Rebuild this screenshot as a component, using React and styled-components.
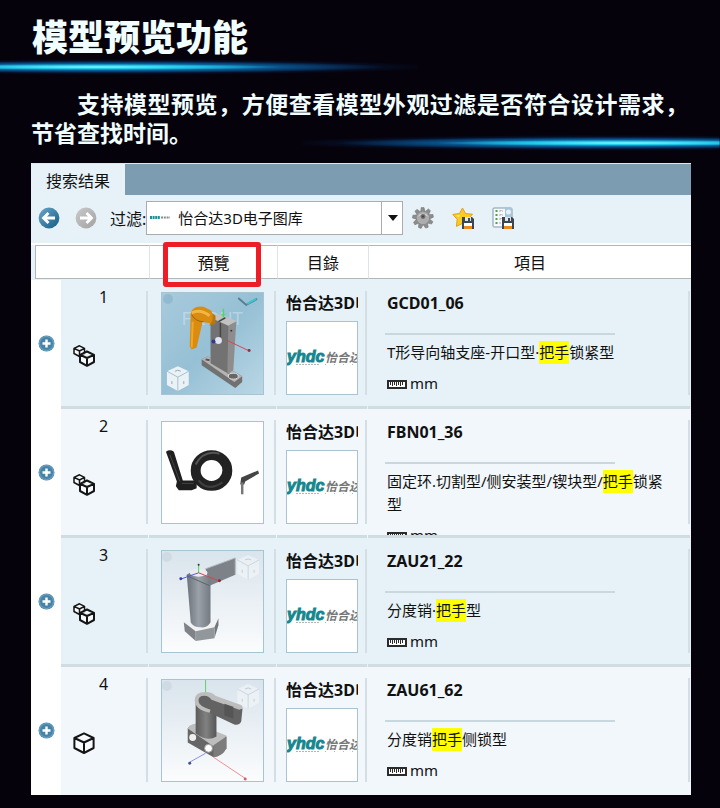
import React, { useState } from 'react'
import styled, { createGlobalStyle } from 'styled-components'

const GlobalStyle = createGlobalStyle`
  * {
    box-sizing: border-box;
  }
  body {
    margin: 0;
    background: #05020b;
    color: #111;
    font-family: 'Noto Sans', 'Noto Sans CJK SC', sans-serif;
    font-size: 15px;
  }
  button {
    display: flex;
    padding: 0;
    border: none;
    background: none;
    cursor: pointer;
  }
`

const results = [
  {
    id: 1,
    name: 'GCD01_06',
    before: 'T形导向轴支座-开口型·',
    after: '锁紧型',
    assembly: true,
    preview: 'support',
  },
  {
    id: 2,
    name: 'FBN01_36',
    before: '固定环.切割型/侧安装型/锲块型/',
    after: '锁紧型',
    assembly: true,
    preview: 'ring',
  },
  {
    id: 3,
    name: 'ZAU21_22',
    before: '分度销·',
    after: '型',
    assembly: true,
    preview: 'pin',
  },
  {
    id: 4,
    name: 'ZAU61_62',
    before: '分度销',
    after: '侧锁型',
    assembly: false,
    preview: 'clamp',
  },
]

const ArrowIcon = ({ id, light, dark, flip }) => (
  <svg width="22" height="22" viewBox="0 0 22 22" aria-hidden="true">
    <defs>
      <linearGradient id={id} x1="0" y1="0" x2="1" y2="1">
        <stop offset="0" stopColor={light} />
        <stop offset="1" stopColor={dark} />
      </linearGradient>
    </defs>
    <circle cx="11" cy="11" r="10.4" fill={`url(#${id})`} />
    <path
      d="M17 11H6M10.5 6L5.5 11l5 5"
      transform={flip ? 'rotate(180 11 11)' : undefined}
      fill="none"
      stroke="#fff"
      strokeWidth="2.8"
    />
  </svg>
)

const Floppy = ({ x, y }) => (
  <g transform={`translate(${x} ${y})`}>
    <path d="M0 0h10l2 2v10H0z" fill="#3b4650" />
    <rect x="3" y="0" width="6" height="4" fill="#dfe6ea" />
    <rect x="6" y="1" width="2" height="3" fill="#3b4650" />
    <rect x="2" y="6" width="8" height="4" fill="#fff" />
    <rect x="2" y="9" width="8" height="3" fill="#ef8b1d" />
  </g>
)

const GearIcon = () => (
  <svg width="22" height="22" viewBox="0 0 22 22" aria-hidden="true">
    {[0, 40, 80, 120, 160, 200, 240, 280, 320].map(deg => (
      <path
        key={deg}
        d="M9.2 .6h2.800l1.600 6H8.400z"
        fill="#8d8d8d"
        stroke="#707070"
        strokeWidth=".5"
        transform={`rotate(${deg} 11 11)`}
      />
    ))}
    <circle cx="11" cy="11" r="6.200" fill="#adadad" />
    <path d="M6.500 9a5.500 4.500 0 0 1 9 0" stroke="#dadada" fill="none" />
    <circle cx="11" cy="9.500" r="2.400" fill="#6d6d6d" />
    <circle cx="11" cy="9.500" r="1" fill="#444" />
  </svg>
)

const StarSaveIcon = () => (
  <svg width="22" height="22" viewBox="0 0 22 22" aria-hidden="true">
    <path
      d="M10.5 1l3 5.6 7 .6-4.6 5 1 6.8-6.4-2.6L4.4 19.4l.8-7L.8 7.4l6.6-.8z"
      fill="#f9cb23"
      stroke="#e0a21a"
      strokeLinejoin="round"
    />
    <path d="M10 3.5L8 8l-4.5.6L7 10z" fill="#fdeb8c" />
    <Floppy x={10} y={10} />
  </svg>
)

const ListSaveIcon = () => (
  <svg width="22" height="22" viewBox="0 0 22 22" aria-hidden="true">
    <rect x="1" y="1" width="19" height="19" rx="1" fill="#f5f9fb" stroke="#7f9bad" />
    <path d="M13 1h7v10h-7z" fill="#a9c5d8" />
    <circle cx="16.5" cy="5" r="2.5" fill="#e8f2f8" />
    <path d="M4.5 3v16" stroke="#5d9a4a" strokeWidth="2" strokeDasharray="2 2" />
    <path d="M7 4h4M7 8h4M7 12h3M7 16h3" stroke="#a5b1b9" strokeDasharray="2 1" />
    <path d="M9 3v9" stroke="#d08c7d" strokeDasharray="1 3" />
    <Floppy x={10} y={10} />
  </svg>
)

const PlusIcon = () => (
  <svg width="17" height="17" viewBox="0 0 17 17" aria-hidden="true">
    <circle cx="8.5" cy="8.5" r="8" fill="#4584a8" />
    <circle cx="8.5" cy="8.5" r="7" fill="none" stroke="#77a7c0" />
    <path d="M8.5 4.5v8M4.5 8.5h8" stroke="#fff" strokeWidth="2.4" />
  </svg>
)

const AssemblyIcon = () => (
  <svg width="22" height="22" viewBox="0 0 22 22" aria-hidden="true">
    <g fill="#f6fafc" stroke="#151515" strokeLinejoin="round">
      <path
        d="M6.5 .8L11.5 3.4V9L6.5 11.5L1 8.5V3.4ZM1 3.4L6.5 6L11.5 3.4M6.5 6V11.5"
        strokeWidth="1.5"
      />
      <path
        d="M14 6.5L21 9.8V17L14 20.8L7 17V9.8ZM7 9.8L14 13L21 9.8M14 13V20.8"
        strokeWidth="2"
      />
    </g>
  </svg>
)

const PartIcon = () => (
  <svg width="22" height="22" viewBox="0 0 22 22" aria-hidden="true">
    <path
      d="M11 1.4L20.6 6V16L11 21L1.4 16V6ZM1.4 6L11 10.5L20.6 6M11 10.5V21"
      fill="#fafdfe"
      stroke="#151515"
      strokeWidth="2"
      strokeLinejoin="round"
    />
  </svg>
)

const RulerIcon = () => (
  <svg width="20" height="9" viewBox="0 0 20 9" aria-hidden="true">
    <rect x="1" y="1" width="18" height="7" fill="#fff" stroke="#2b2b2b" strokeWidth="2" />
    <path
      d="M3.5 1v4M5.5 1v5M7.5 1v4M9.500 1v5M11.500 1v4M13.500 1v5M15.500 1v4"
      stroke="#2b2b2b"
    />
  </svg>
)

const BrandLogo = () => (
  <svg width="70" height="72" viewBox="0 0 70 72" role="img" aria-label="怡合达">
    <text
      x="0"
      y="40"
      fill="#16878f"
      stroke="#16878f"
      strokeWidth="1"
      fontFamily="'Liberation Sans', sans-serif"
      fontWeight="700"
      fontStyle="italic"
      fontSize="16"
    >
      yhdc
    </text>
    <text
      x="38"
      y="40"
      fill="#777"
      fontFamily="'Noto Sans CJK SC', sans-serif"
      fontWeight="700"
      fontStyle="italic"
      fontSize="12"
    >
      怡合达
    </text>
    <path d="M9 42.5h24" stroke="#b5b5b5" strokeDasharray="2 1" />
    <path d="M38 42.5h32" stroke="#8fc3c8" strokeDasharray="1 8" />
  </svg>
)

const SmallLogo = () => (
  <svg width="21" height="6" viewBox="0 0 21 6" aria-hidden="true">
    <path d="M1 2.5h10" stroke="#1b8f98" strokeWidth="3" strokeDasharray="2 .6" />
    <path d="M12 2.5h9" stroke="#8a8a8a" strokeWidth="2" strokeDasharray="2 .8" />
  </svg>
)

const GhostCube = ({ x, y, opacity }) => (
  <g transform={`translate(${x} ${y})`} opacity={opacity}>
    <path d="M0 -12L11 -7V7L0 13L-11 7V-7Z" fill="#fff" />
    <path d="M-11 -7L0 -1L11 -7M0 -1V13" stroke="#a9bfcb" fill="none" />
    <path d="M-3 -7l3-1 3 1M-6 3v3M6 3v3" stroke="#8fa8b6" fill="none" />
  </g>
)

const SupportPreview = () => (
  <>
    <rect width="102" height="102" fill="url(#skyBlue)" />
    <circle cx="6" cy="6" r="5" fill="#84b1c8" opacity=".6" />
    <text
      x="20"
      y="32"
      fill="#fff"
      opacity=".3"
      fontFamily="'Liberation Sans', sans-serif"
      fontSize="18"
    >
      FRONT
    </text>
    <path d="M77 5l8 7 11-6" stroke="#557d94" strokeWidth="2" fill="none" />
    <path d="M86 11l9-5" stroke="#3bc4cc" strokeWidth="2" />
    <path d="M40 67l6-3 35 20v6l-7 6-34-23z" fill="#717171" />
    <path d="M40 67l6-3 35 20-8 6z" fill="#b4b4b4" />
    <ellipse cx="72" cy="84" rx="5" ry="3" fill="#666" stroke="#ddd" />
    <path d="M44 67l4 1" stroke="#555" strokeWidth="2" />
    <path d="M49 25l16 5 3 1v51L49 71z" fill="#727272" />
    <path d="M67 32l8-3-3 49-6 4z" fill="#8d8d8d" />
    <path d="M49 25l8-4 18 7-8 5z" fill="#c2c2c2" />
    <path d="M57 29l7-4M59 30v18" stroke="#454545" strokeWidth="1.5" />
    <path d="M50 20l4 3v8l-6 2z" fill="#b8780c" />
    <path d="M29 20q3-8 13-6l8 4q3 9-1 13l-8-2-6 26-5 2-2-3z" fill="#d98c10" />
    <path d="M30 20q9-4 18 3" stroke="#f3b544" strokeWidth="3" fill="none" />
    <path d="M31 29l-1 26" stroke="#f1a728" strokeWidth="2" />
    <path d="M30 22q4 7 12 7" stroke="#9b610a" fill="none" />
    <circle cx="70" cy="38" r="1" fill="#333" />
    <path d="M62 16v9M60 22h4" stroke="#55d36b" strokeWidth="1.5" />
    <circle cx="57" cy="48" r="3.5" fill="#dfe3f2" />
    <circle cx="52" cy="49" r="2" fill="#34388d" />
    <path d="M66 48l21 10" stroke="#d3465a" />
    <circle cx="88" cy="58" r="1.5" fill="#7a3945" />
    <GhostCube x={16} y={86} opacity=".8" />
  </>
)

const RingPreview = () => (
  <>
    <rect width="102" height="102" fill="#fff" />
    <path d="M4 30q4-3 8 0l9 29h14v8l-5 2H17l-3-4 1-5z" fill="#1f1f1f" />
    <path d="M8 33l10 27M20 62h12" stroke="#474747" />
    <ellipse cx="50" cy="49" rx="16" ry="15.5" fill="none" stroke="#222" strokeWidth="10" />
    <path d="M34 43q8-15 24-11" stroke="#555" strokeWidth="2" fill="none" />
    <path d="M37 59q9 12 24 2" stroke="#3f3f3f" strokeWidth="2" fill="none" />
    <path d="M80 56l17-7 1 3-14 8-1 3h-4z" fill="#444" />
    <path d="M81 61v12" stroke="#777" strokeWidth="2.5" />
  </>
)

const PinPreview = () => (
  <>
    <rect width="102" height="102" fill="url(#mist)" />
    <circle cx="5" cy="6" r="5" fill="#cfdbe4" />
    <GhostCube x={87} y={16} opacity=".4" />
    <path d="M44 18l30-11v17L48 35z" fill="#7d8289" />
    <path d="M44 18l30-11v17" stroke="#b4b9be" fill="none" />
    <path d="M22 72l10-7 25 3-4 9-19 5z" fill="#f1f2f3" />
    <path d="M22 72l12 9v10l-11-10z" fill="#7f8388" />
    <path d="M53 77l4-9v7l-4 13z" fill="#72777c" />
    <path d="M34 81l19-4v11l-19 3z" fill="#92979c" />
    <path d="M25 24q10-8 24 4v44q-3 6-10 5-8 0-10-5z" fill="url(#steel)" />
    <ellipse cx="37" cy="22" rx="9" ry="4" fill="#e9ebed" />
    <path d="M25 25l23 10" stroke="#5e6369" />
    <path d="M37 22v-8" stroke="#48d45a" />
    <path d="M37 22l-17 6" stroke="#5058d8" />
    <path d="M37 22l20 8" stroke="#d04450" />
    <circle cx="19" cy="28" r="1.5" fill="#3a41a0" />
    <circle cx="58" cy="30" r="1.5" fill="#8c2d34" />
    <circle cx="37" cy="14" r="1" fill="#333" />
  </>
)

const ClampPreview = () => (
  <>
    <rect width="102" height="102" fill="url(#mist)" />
    <circle cx="5" cy="6" r="5" fill="#cfdbe4" />
    <GhostCube x={87} y={16} opacity=".4" />
    <path d="M44 0v13" stroke="#5bd26a" />
    <path d="M26 49q2-3 7-4l32 12v12q-4 8-13 9l-26-15z" fill="#666" />
    <path d="M26 49q2-4 8-5l31 12q-2 6-13 11z" fill="#bdbdbd" />
    <path d="M52 66l13-9v12q-4 8-13 9z" fill="#7c7c7c" />
    <path d="M34 18q6-6 21 5v34q-9 6-21-3z" fill="url(#iron)" />
    <path d="M40 14l39 12q3 1 2 6l-1 10q-2 4-7 3L50 34 36 24z" fill="#636363" />
    <path
      d="M33 20q0-8 11-8 7 0 10 4l25 9q3 1 2 4l-3 1-28-10q-3-4-7-4-7 0-6 6 1 5 12 8l-1 3Q33 30 33 20z"
      fill="#bdbdbd"
    />
    <path d="M63 24l9 3v12l-9-3z" fill="#555" />
    <circle cx="31" cy="58" r="3.5" fill="#f0f0f0" />
    <circle cx="47" cy="69" r="4" fill="#fff" stroke="#999" />
    <path d="M44 74l-16 9" stroke="#8990e8" />
    <circle cx="28" cy="84" r="1.5" fill="#444f8f" />
    <path d="M52 78l33 22" stroke="#ee8e96" />
    <circle cx="84" cy="100" r="1.5" fill="#d75d68" />
  </>
)

const previews = {
  support: SupportPreview,
  ring: RingPreview,
  pin: PinPreview,
  clamp: ClampPreview,
}

const GradientDefs = () => (
  <Hidden aria-hidden="true">
    <defs>
      <linearGradient id="skyBlue" x1="0" y1="0" x2="1" y2="1">
        <stop offset="0" stopColor="#a8cadc" />
        <stop offset=".5" stopColor="#96c0d5" />
        <stop offset="1" stopColor="#bad7e5" />
      </linearGradient>
      <linearGradient id="mist" x1="0" y1="0" x2="0" y2="1">
        <stop offset="0" stopColor="#d9e4ec" />
        <stop offset="1" stopColor="#fbfcfd" />
      </linearGradient>
      <linearGradient id="steel" x1="0" x2="1">
        <stop offset="0" stopColor="#6b7178" />
        <stop offset=".5" stopColor="#9ba1a8" />
        <stop offset="1" stopColor="#747a81" />
      </linearGradient>
      <linearGradient id="iron" x1="0" x2="1">
        <stop offset="0" stopColor="#5b5b5b" />
        <stop offset=".5" stopColor="#818181" />
        <stop offset="1" stopColor="#565656" />
      </linearGradient>
    </defs>
  </Hidden>
)

const ResultRow = ({ item, even }) => {
  const [open, setOpen] = useState(false)
  const Preview = previews[item.preview]

  return (
    <Row $even={even}>
      <ExpandCell>
        <button
          type="button"
          aria-label={`展开 ${item.name}`}
          aria-expanded={open}
          onClick={() => setOpen(!open)}
        >
          <PlusIcon />
        </button>
      </ExpandCell>
      <td>
        <CellBody>
          <IndexBody>
            <span>{item.id}</span>
            {item.assembly ? <AssemblyIcon /> : <PartIcon />}
          </IndexBody>
        </CellBody>
      </td>
      <td>
        <CellBody>
          <PreviewBody>
            <Thumb>
              <svg width="101" height="101" viewBox="0 0 102 102" role="img" aria-label={item.name}>
                <Preview />
              </svg>
            </Thumb>
          </PreviewBody>
        </CellBody>
      </td>
      <td>
        <CellBody>
          <CatalogBody>
            <CatalogName>怡合达3D电子图库</CatalogName>
            <LogoBox>
              <BrandLogo />
            </LogoBox>
          </CatalogBody>
        </CellBody>
      </td>
      <td>
        <CellBody>
          <ItemBody>
            <ItemName>{item.name}</ItemName>
            <Divider />
            <Description>
              {item.before}
              <mark>把手</mark>
              {item.after}
            </Description>
            <Unit>
              <RulerIcon />
              mm
            </Unit>
          </ItemBody>
        </CellBody>
      </td>
    </Row>
  )
}

const App = () => {
  return (
    <Page>
      <GlobalStyle />
      <GradientDefs />
      <Hero>
        <Title>模型预览功能</Title>
        <Glow />
        <Intro>
          支持模型预览，方便查看模型外观过滤是否符合设计需求，节省查找时间。
        </Intro>
        <BottomGlow />
      </Hero>

      <Panel>
        <TabBar role="tablist">
          <Tab type="button" role="tab" aria-selected="true">
            搜索结果
          </Tab>
        </TabBar>

        <Toolbar>
          <NavGroup>
            <button type="button" aria-label="后退">
              <ArrowIcon id="back" light="#6ba7c8" dark="#145b86" />
            </button>
            <button type="button" aria-label="前进">
              <ArrowIcon id="forward" light="#c9c9c9" dark="#a2a2a2" flip />
            </button>
          </NavGroup>
          <FilterLabel htmlFor="catalog">过滤:</FilterLabel>
          <SelectBox>
            <select id="catalog" defaultValue="yhd">
              <option value="yhd">怡合达3D电子图库</option>
            </select>
            <SelectLogo>
              <SmallLogo />
            </SelectLogo>
            <SelectArrow>
              <svg width="10" height="6" viewBox="0 0 10 6" aria-hidden="true">
                <path d="M0 0h10L5 6z" fill="#111" />
              </svg>
            </SelectArrow>
          </SelectBox>
          <ActionGroup>
            <button type="button" aria-label="设置">
              <GearIcon />
            </button>
            <button type="button" aria-label="保存收藏">
              <StarSaveIcon />
            </button>
            <button type="button" aria-label="保存列表">
              <ListSaveIcon />
            </button>
          </ActionGroup>
        </Toolbar>

        <Table>
          <colgroup>
            <col width="30" />
            <col width="88" />
            <col width="128" />
            <col width="91" />
            <col />
          </colgroup>
          <thead>
            <tr>
              <th colSpan="2">
                <HeadCell $first />
              </th>
              <th>
                <HeadCell>
                  預覽
                  <Marker />
                </HeadCell>
              </th>
              <th>
                <HeadCell>目錄</HeadCell>
              </th>
              <th>
                <HeadCell>項目</HeadCell>
              </th>
            </tr>
          </thead>
          <tbody>
            {results.map((item, i) => (
              <ResultRow key={item.id} item={item} even={i % 2 === 1} />
            ))}
          </tbody>
        </Table>
      </Panel>
    </Page>
  )
}

const Page = styled.main`
  padding-bottom: 13px;
`

const Hidden = styled.svg`
  position: absolute;
  width: 0;
  height: 0;
`

const Hero = styled.header`
  position: relative;
  padding: 15px 0 16px;
  color: #f1feff;
  font-family: 'Noto Sans CJK SC', sans-serif;
`

const Title = styled.h1`
  margin: 0;
  padding-left: 32px;
  padding-bottom: 4px;
  font-size: 36px;
  line-height: 40px;
  font-weight: 900;
`

const Glow = styled.div`
  width: 58%;
  height: 16px;
  background:
    radial-gradient(ellipse 46% 3px at 22% 50%, #7dfcff 0%, #29d9f4cc 50%, transparent 100%),
    radial-gradient(ellipse 66% 6px at 26% 50%, #12c0e6 0%, #0a76b8aa 55%, transparent 100%),
    radial-gradient(ellipse 76% 8px at 28% 50%, #0a6bb0cc 0%, #062e6c88 60%, transparent 100%);
`

const BottomGlow = styled(Glow)`
  position: absolute;
  right: 0;
  bottom: 12px;
  transform: scaleX(-1);
`

const Intro = styled.p`
  margin: 14px 32px 0 31px;
  font-size: 23px;
  line-height: 29px;
  font-weight: 700;
  text-indent: 2em;
  text-align: justify;
`

const Panel = styled.section`
  margin: 0 29px 0 31px;
  background: #e6f2f8;
`

const TabBar = styled.div`
  display: flex;
  height: 32px;
  background: #7b9cb1;
  border-top: 1px solid #dce9f0;
`

const Tab = styled.button`
  align-items: center;
  padding: 0 15px;
  background: #e6f2f8;
  color: #111;
  font: inherit;
  font-size: 16px;
`

const Toolbar = styled.div`
  display: flex;
  align-items: center;
  height: 50px;
  padding-left: 7px;
  padding-bottom: 2px;
  border-bottom: 2px solid #fff;
`

const NavGroup = styled.div`
  display: flex;
  gap: 15px;
  margin-right: 13px;
`

const FilterLabel = styled.label`
  font-size: 16px;
`

const ActionGroup = styled.div`
  display: flex;
  gap: 18px;
  margin-left: 9px;
`

const SelectBox = styled.div`
  position: relative;
  width: 257px;
  select {
    display: block;
    width: 100%;
    height: 34px;
    padding: 0 24px 0 31px;
    border: 1px solid #acacac;
    border-radius: 0;
    background: #fff;
    color: #111;
    font: inherit;
    appearance: none;
  }
`

const SelectLogo = styled.span`
  position: absolute;
  top: 0;
  bottom: 0;
  left: 3px;
  display: flex;
  align-items: center;
  pointer-events: none;
`

const SelectArrow = styled.span`
  position: absolute;
  top: 0;
  right: 0;
  bottom: 0;
  display: flex;
  align-items: center;
  justify-content: center;
  width: 22px;
  border-left: 1px solid #acacac;
  pointer-events: none;
`

const Table = styled.table`
  width: 100%;
  table-layout: fixed;
  border-collapse: collapse;
  th,
  td {
    padding: 0;
    vertical-align: top;
  }
`

const HeadCell = styled.div`
  position: relative;
  display: flex;
  align-items: center;
  justify-content: center;
  height: 34px;
  margin-bottom: 1px;
  margin-left: ${({ $first }) => ($first ? '4px' : '0')};
  border: solid #b0b6b9;
  border-width: 1px 0 1px ${({ $first }) => ($first ? '1px' : '0')};
  background: #fff;
  font-family: 'Noto Sans CJK TC', sans-serif;
  font-size: 16px;
  font-weight: 400;
  th + th > & {
    border-left: 1px solid #dde3e6;
  }
`

const Marker = styled.span`
  position: absolute;
  top: -4px;
  left: 13px;
  right: 16px;
  height: 45px;
  border: 5px solid #ee1c24;
  border-radius: 3px;
`

const Row = styled.tr`
  background: ${({ $even }) => ($even ? '#f1f7fb' : '#e6f2f8')};
`

const ExpandCell = styled.td`
  background: #fff;
  button {
    margin: 55px auto 0 7px;
  }
`

const CellBody = styled.div`
  height: 129px;
  margin-right: 1px;
  padding-top: 11px;
  overflow: hidden;
  border-bottom: 3px solid #cfdce2;
  tr:last-child & {
    height: 128px;
    border-bottom: none;
  }
`

const CellContent = styled.div`
  height: 104px;
  border-right: 2px solid #d3dfe5;
`

const IndexBody = styled(CellContent)`
  display: flex;
  flex-direction: column;
  align-items: center;
  font-size: 16px;
  line-height: 12px;
  svg {
    align-self: flex-start;
    margin: 42px 0 0 12px;
  }
`

const PreviewBody = styled(CellContent)`
  padding: 1px 0 0 12px;
`

const Thumb = styled.div`
  width: 103px;
  height: 103px;
  border: 1px solid #a9c4d1;
  svg {
    display: block;
  }
`

const CatalogBody = styled(CellContent)`
  padding: 0 7px 0 9px;
`

const CatalogName = styled.div`
  overflow: hidden;
  font-size: 16px;
  line-height: 24px;
  font-weight: 700;
  white-space: nowrap;
`

const LogoBox = styled.div`
  width: 72px;
  height: 74px;
  margin-top: 6px;
  overflow: hidden;
  border: 1px solid #a9c4d1;
  background: #fff;
`

const ItemBody = styled(CellContent)`
  padding: 0 12px 0 19px;
`

const ItemName = styled.div`
  font-size: 16px;
  line-height: 24px;
  font-weight: 700;
`

const Divider = styled.hr`
  width: 230px;
  height: 2px;
  margin: 18px 0 6px -2px;
  border: none;
  background: #c9d8df;
`

const Description = styled.div`
  line-height: 23px;
  mark {
    display: inline-block;
    background: #ff0;
    color: inherit;
  }
`

const Unit = styled.div`
  display: flex;
  align-items: center;
  gap: 3px;
  margin-top: 9px;
  line-height: 20px;
  svg {
    margin-top: 3px;
  }
`

export default App
